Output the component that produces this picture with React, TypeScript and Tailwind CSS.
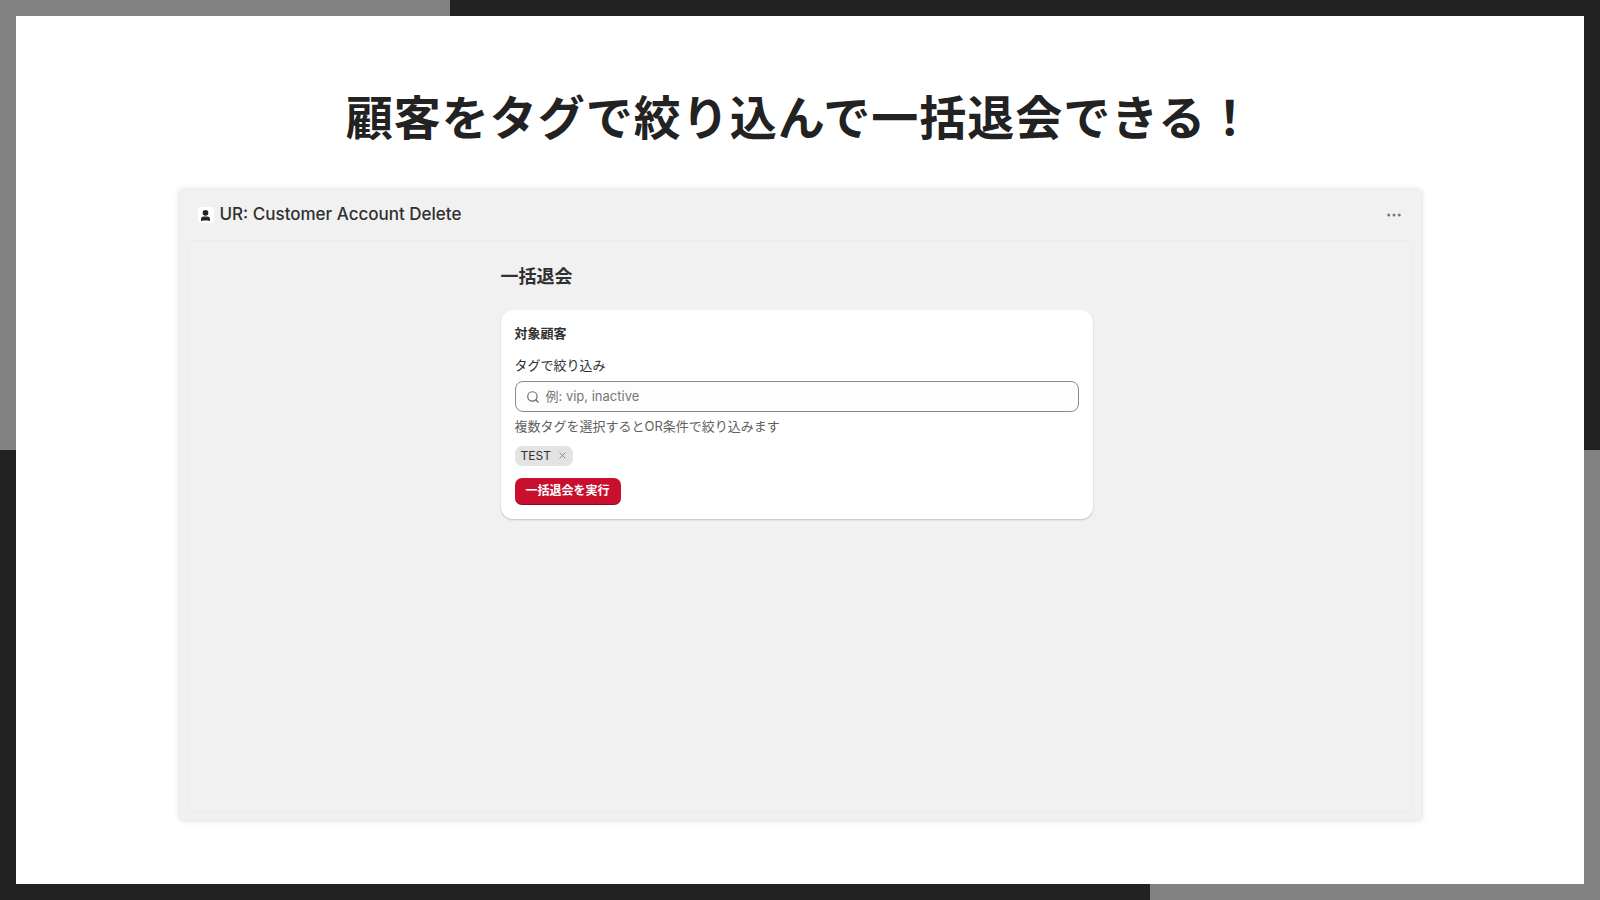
import { Search, User, Ellipsis, X } from "lucide-react";

const font = { fontFamily: "Inter, 'Noto Sans CJK JP', sans-serif" };

export default function App() {
  return (
    <div className="relative w-[1600px] h-[900px] overflow-hidden bg-[#222222]" style={font}>
      {/* background decor */}
      <div className="absolute left-0 top-0 w-[450px] h-[16px] bg-[#828282]" />
      <div className="absolute left-0 top-0 w-[16px] h-[450px] bg-[#828282]" />
      <div className="absolute right-0 top-[450px] w-[16px] h-[450px] bg-[#828282]" />
      <div className="absolute left-[1150px] bottom-0 w-[450px] h-[16px] bg-[#828282]" />

      <div className="absolute left-[16px] top-[16px] w-[1568px] h-[868px] bg-white flex flex-col items-center">
        <h1 className="mt-[70px] text-[47px] font-bold text-[#222] tracking-[1px] leading-[64px]">
          顧客をタグで絞り込んで一括退会できる！
        </h1>
        <div className="mt-[40px] w-[1241px] h-[630px] bg-[#f1f1f1] shadow-[0_0_6px_rgba(0,0,0,0.18)] flex flex-col">
          <div className="h-[50px] flex items-center justify-between px-[18px] shrink-0">
            <div className="flex items-center gap-[6px]">
              <div className="w-[16px] h-[16px] bg-white rounded-[3px] flex items-center justify-center">
                <User className="w-[13px] h-[13px] text-[#222] fill-[#222]" strokeWidth={2.5} />
              </div>
              <span className="text-[17px] font-medium text-[#303030]">UR: Customer Account Delete</span>
            </div>
            <Ellipsis className="w-[18px] h-[18px] text-[#777]" />
          </div>
          <div className="flex-1 mx-[8px] mb-[8px] bg-[#f1f1f1] border border-[#ececec] rounded-t-[6px]">
            <div className="ml-[312px] w-[592px]">
              <h2 className="mt-[22px] text-[18px] font-bold text-[#303030]">一括退会</h2>
              <div className="mt-[20px] bg-white rounded-[12px] shadow-[0_1px_2px_rgba(0,0,0,0.2)] px-[14px] pt-[14px] pb-[14px] flex flex-col">
                <div className="text-[13px] font-bold text-[#303030]">対象顧客</div>
                <div className="mt-[12px] text-[13px] text-[#303030]">タグで絞り込み</div>
                <div className="mt-[6px] h-[31px] border border-[#8a8a8a] rounded-[8px] bg-[#fdfdfd] flex items-center px-[10px] gap-[6px]">
                  <Search className="w-[14px] h-[14px] text-[#666]" />
                  <span className="text-[13px] text-[#777]">例: vip, inactive</span>
                </div>
                <div className="mt-[5px] text-[13px] text-[#616161]">複数タグを選択するとOR条件で絞り込みます</div>
                <div className="mt-[9px] self-start h-[20px] rounded-[7px] bg-[#e3e3e3] flex items-center pl-[6px] pr-[5px] gap-[6px]">
                  <span className="text-[12px] text-[#303030]">TEST</span>
                  <X className="w-[11px] h-[11px] text-[#888]" />
                </div>
                <button className="mt-[12px] self-start h-[27px] px-[11px] rounded-[7px] bg-[#c8102e] text-white text-[12px] font-bold shadow-[inset_0_-1px_0_rgba(0,0,0,0.3)]">
                  一括退会を実行
                </button>
              </div>
            </div>
          </div>
        </div>
      </div>
    </div>
  );
}
